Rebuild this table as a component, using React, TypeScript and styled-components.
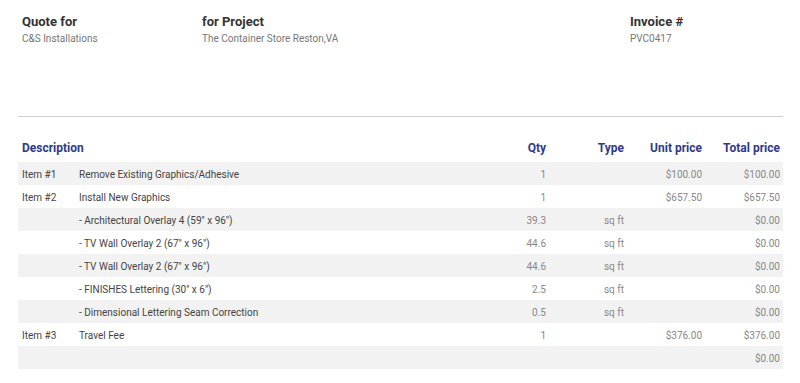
import styled, { createGlobalStyle } from "styled-components";

const GlobalStyle = createGlobalStyle`
  body {
    margin: 0;
    background: #fff;
    font-family: Roboto, "Liberation Sans", Arial, sans-serif;
  }
`;

type Row = {
  item?: string;
  description?: string;
  qty?: string;
  type?: string;
  unit?: string;
  total: string;
};

const rows: Row[] = [
  { item: "Item #1", description: "Remove Existing Graphics/Adhesive", qty: "1", unit: "$100.00", total: "$100.00" },
  { item: "Item #2", description: "Install New Graphics", qty: "1", unit: "$657.50", total: "$657.50" },
  { description: "- Architectural Overlay 4 (59\" x 96\")", qty: "39.3", type: "sq ft", total: "$0.00" },
  { description: "- TV Wall Overlay 2 (67\" x 96\")", qty: "44.6", type: "sq ft", total: "$0.00" },
  { description: "- TV Wall Overlay 2 (67\" x 96\")", qty: "44.6", type: "sq ft", total: "$0.00" },
  { description: "- FINISHES Lettering (30\" x 6\")", qty: "2.5", type: "sq ft", total: "$0.00" },
  { description: "- Dimensional Lettering Seam Correction", qty: "0.5", type: "sq ft", total: "$0.00" },
  { item: "Item #3", description: "Travel Fee", qty: "1", unit: "$376.00", total: "$376.00" },
  { total: "$0.00" },
];

const App = () => {
  return (
    <>
      <GlobalStyle />
      <S.Page>
        <S.Header>
          <S.InfoBlock>
            <S.InfoTitle>Quote for</S.InfoTitle>
            <S.InfoValue>C&amp;S Installations</S.InfoValue>
          </S.InfoBlock>
          <S.InfoBlock>
            <S.InfoTitle>for Project</S.InfoTitle>
            <S.InfoValue>The Container Store Reston,VA</S.InfoValue>
          </S.InfoBlock>
          <S.InfoBlock>
            <S.InfoTitle>Invoice #</S.InfoTitle>
            <S.InfoValue>PVC0417</S.InfoValue>
          </S.InfoBlock>
        </S.Header>

        <S.Divider />

        <S.HeadRow>
          <S.HeadCell $span>Description</S.HeadCell>
          <S.HeadCell $right>Qty</S.HeadCell>
          <S.HeadCell $right>Type</S.HeadCell>
          <S.HeadCell $right>Unit price</S.HeadCell>
          <S.HeadCell $right>Total price</S.HeadCell>
        </S.HeadRow>

        {rows.map((row, i) => (
          <S.ItemRow key={i} $striped={i % 2 === 0}>
            <S.TextCell>{row.item}</S.TextCell>
            <S.TextCell>{row.description}</S.TextCell>
            <S.NumCell>{row.qty}</S.NumCell>
            <S.NumCell>{row.type}</S.NumCell>
            <S.NumCell>{row.unit}</S.NumCell>
            <S.NumCell>{row.total}</S.NumCell>
          </S.ItemRow>
        ))}
      </S.Page>
    </>
  );
};

export default App;

const columns = "57px 1fr 67px 78px 78px 78px";

const S = {
  Page: styled.div`
    padding: 14px 17px 0 18px;
  `,
  Header: styled.div`
    display: grid;
    grid-template-columns: 180px 428px 1fr;
    padding-left: 4px;
  `,
  InfoBlock: styled.div`
    display: flex;
    flex-direction: column;
    gap: 2px;
  `,
  InfoTitle: styled.span`
    font-size: 13px;
    line-height: 16px;
    font-weight: 700;
    color: #333;
  `,
  InfoValue: styled.span`
    font-size: 10px;
    line-height: 14px;
    color: #777;
  `,
  Divider: styled.hr`
    margin: 70px 0 0;
    border: none;
    border-top: 1px solid #cfcfcf;
  `,
  HeadRow: styled.div`
    display: grid;
    grid-template-columns: ${columns};
    align-items: center;
    height: 29px;
    margin-top: 16px;
    padding: 0 3px 0 4px;
  `,
  HeadCell: styled.div<{ $right?: boolean; $span?: boolean }>`
    font-size: 12px;
    font-weight: 700;
    color: #2e3a8c;
    text-align: ${(p) => (p.$right ? "right" : "left")};
    grid-column: ${(p) => (p.$span ? "span 2" : "auto")};
  `,
  ItemRow: styled.div<{ $striped: boolean }>`
    display: grid;
    grid-template-columns: ${columns};
    align-items: center;
    height: 23px;
    padding: 0 3px 0 4px;
    background: ${(p) => (p.$striped ? "#f2f2f2" : "transparent")};
  `,
  TextCell: styled.div`
    font-size: 10px;
    color: #444;
    white-space: nowrap;
    padding-top: 1px;
  `,
  NumCell: styled.div`
    font-size: 10px;
    color: #888;
    text-align: right;
    white-space: nowrap;
    padding-top: 1px;
  `,
};
